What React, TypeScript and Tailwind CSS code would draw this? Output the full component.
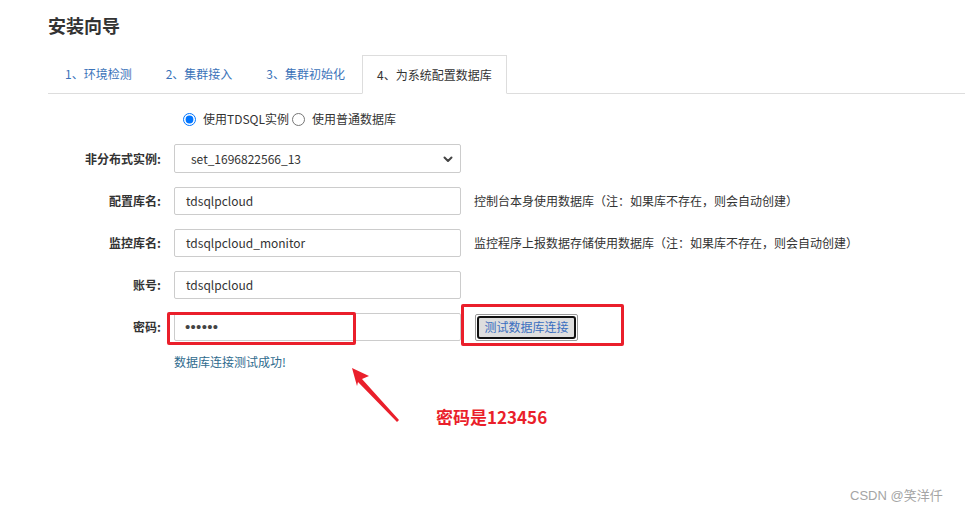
import React from "react";

const FONT = { fontFamily: '"Noto Sans CJK SC", "Liberation Sans", sans-serif' };

interface RowProps {
    label: string;
    children: React.ReactNode;
    hint?: string;
    className?: string;
}

const FormRow: React.FC<RowProps> = ({ label, children, hint, className = "" }) => (
    <div className={`flex items-center ${className}`}>
        <label className="w-[114px] shrink-0 text-right text-[12px] font-bold text-[#333] pr-[1px]">{label}</label>
        <div className="ml-[12px] w-[287px] shrink-0">{children}</div>
        {hint && <span className="ml-[13px] text-[12px] text-[#333] whitespace-nowrap">{hint}</span>}
    </div>
);

const TextBox = ({ value }: { value: string }) => (
    <div className="h-[28px] w-full border border-[#ccc] rounded-[2px] bg-white flex items-center pl-[11px] text-[12px] text-[#333]">
        {value}
    </div>
);

export default function App() {
    const tabs = ["1、环境检测", "2、集群接入", "3、集群初始化"];

    return (
        <div className="relative w-[966px] h-[512px] bg-white overflow-hidden" style={FONT}>
            <div className="pl-[48px] pr-[1px]">
                {/* title */}
                <h1 className="pt-[14px] text-[18px] leading-[22px] font-bold text-[#333]">安装向导</h1>

                {/* tabs */}
                <div className="mt-[19px] flex border-b border-[#ddd]">
                    {tabs.map((t) => (
                        <div key={t} className="h-[38px] px-[16px] border border-transparent flex items-center text-[12px] text-[#3b73b9] whitespace-nowrap">
                            {t}
                        </div>
                    ))}
                    <div className="h-[39px] -mb-[1px] px-[14px] border border-[#ddd] border-b-white bg-white flex items-center text-[12px] text-[#333] whitespace-nowrap">
                        4、为系统配置数据库
                    </div>
                </div>

                {/* radios */}
                <div className="mt-[17px] ml-[135px] flex items-center h-[16px] text-[12px] text-[#333]">
                    <input type="radio" name="dbtype" defaultChecked className="m-0 w-[13px] h-[13px]" />
                    <span className="ml-[7px]">使用TDSQL实例</span>
                    <input type="radio" name="dbtype" className="ml-[3px] m-0 w-[13px] h-[13px]" />
                    <span className="ml-[7px]">使用普通数据库</span>
                </div>

                {/* form */}
                <div className="mt-[17px] flex flex-col">
                    <FormRow label="非分布式实例:">
                        <div className="h-[29px] w-full border border-[#ccc] rounded-[2px] bg-white flex items-center justify-between pl-[16px] pr-[6px] text-[12px] text-[#333]">
                            <span>set_1696822566_13</span>
                            <svg width="12" height="12" viewBox="0 0 12 12" fill="none">
                                <path d="M2.5 4.5 L6 8 L9.5 4.5" stroke="#444" strokeWidth="2" strokeLinecap="round" strokeLinejoin="round" />
                            </svg>
                        </div>
                    </FormRow>
                    <FormRow label="配置库名:" className="mt-[14px]" hint="控制台本身使用数据库（注：如果库不存在，则会自动创建）">
                        <TextBox value="tdsqlpcloud" />
                    </FormRow>
                    <FormRow label="监控库名:" className="mt-[14px]" hint="监控程序上报数据存储使用数据库（注：如果库不存在，则会自动创建）">
                        <TextBox value="tdsqlpcloud_monitor" />
                    </FormRow>
                    <FormRow label="账号:" className="mt-[14px]">
                        <TextBox value="tdsqlpcloud" />
                    </FormRow>
                    <div className="mt-[14px] flex items-center">
                        <label className="w-[114px] shrink-0 text-right text-[12px] font-bold text-[#333] pr-[1px]">密码:</label>
                        <div className="ml-[12px] w-[287px] shrink-0">
                            <div
                                className="h-[28px] w-full border border-[#ccc] rounded-[2px] bg-white flex items-center pl-[10px] text-[15px] tracking-[0.3px] text-[#444]"
                                style={{ fontFamily: '"Liberation Sans", sans-serif' }}
                            >
                                ••••••
                            </div>
                        </div>
                        <div className="ml-[14px] h-[27px] w-[103px] border border-[#999] rounded-[2px] p-[1px]">
                            <button className="h-full w-full border-2 border-[#111] rounded-[3px] bg-[#dedede] text-[12px] text-[#3a6fc0] flex items-center justify-center">
                                测试数据库连接
                            </button>
                        </div>
                    </div>
                    <p className="mt-[13px] ml-[126px] text-[12px] leading-[16px] text-[#2f6b8e]">数据库连接测试成功!</p>
                </div>
            </div>

            {/* annotations */}
            <div className="absolute left-[167px] top-[312px] w-[189px] h-[33px] border-[3px] border-[#ea1f2b] rounded-[2px]" />
            <div className="absolute left-[461px] top-[304px] w-[163px] h-[42px] border-[3px] border-[#ea1f2b] rounded-[2px]" />
            <svg className="absolute left-0 top-0" width="966" height="512" viewBox="0 0 966 512">
                <polygon
                    points="352,368 369,376 362,379 399,420 397,422 358,382 357,386"
                    fill="#ea1f2b"
                />
            </svg>
            <div className="absolute left-[436px] top-[406px] text-[17px] leading-[22px] font-bold text-[#ea1f2b]">密码是123456</div>
            <div className="absolute left-[850px] top-[486px] text-[13px] text-[#a5a5a5]" style={{ fontFamily: '"Liberation Sans", "Noto Sans CJK SC", sans-serif' }}>
                CSDN @笑洋仟
            </div>
        </div>
    );
}
